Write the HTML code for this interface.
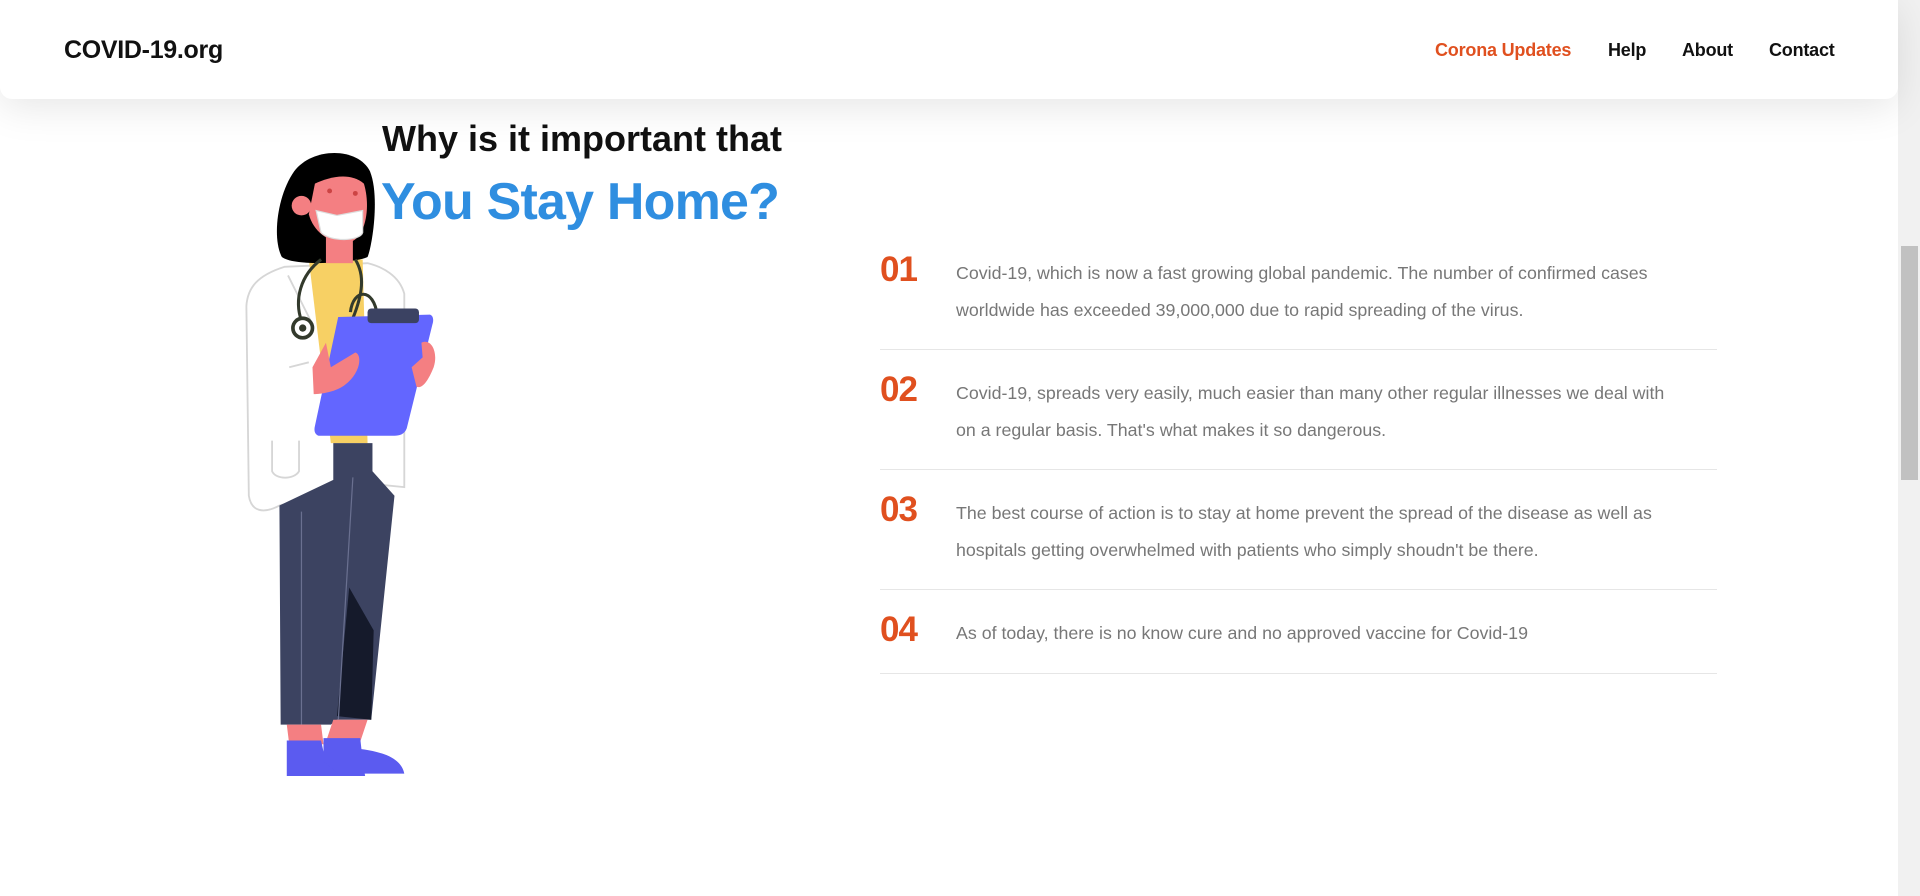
<!DOCTYPE html>
<html><head><meta charset="utf-8">
<style>
html,body{margin:0;padding:0;width:1920px;height:896px;overflow:hidden;background:#fff;font-family:"Liberation Sans",sans-serif;}
.nav{position:absolute;left:0;top:0;width:1898px;height:99px;background:#fff;border-radius:0 0 12px 12px;box-shadow:0 8px 40px rgba(0,0,0,0.10);z-index:2}
.logo{position:absolute;left:64px;top:36px;font-size:25px;font-weight:bold;color:#111;letter-spacing:-0.3px}
.menu{position:absolute;top:40px;font-size:18px;color:#111;font-weight:bold;letter-spacing:-0.2px}
.sb{position:absolute;left:1898px;top:0;width:22px;height:896px;background:#f1f1f1}
.thumb{position:absolute;left:1901px;top:246px;width:17px;height:234px;background:#c1c1c1}
h1{position:absolute;margin:0;left:382px;top:118px;font-size:36px;font-weight:bold;color:#111;letter-spacing:0px;white-space:nowrap}
h2{position:absolute;margin:0;left:381px;top:172px;font-size:52px;font-weight:bold;color:#2f8ee0;letter-spacing:-0.8px;white-space:nowrap}
.num{position:absolute;left:880px;font-size:35px;font-weight:bold;color:#e0501f;letter-spacing:-1px}
.txt{position:absolute;left:956px;font-size:17.8px;color:#777;line-height:37px;white-space:nowrap}
.hr{position:absolute;left:880px;width:837px;height:1px;background:#e6e6e6}
svg{position:absolute;left:0;top:0}
</style></head><body>
<div class="nav">
<div class="logo">COVID-19.org</div>
<div class="menu" style="left:1435px;color:#e0501f">Corona Updates</div>
<div class="menu" style="left:1608px">Help</div>
<div class="menu" style="left:1682px">About</div>
<div class="menu" style="left:1769px">Contact</div>
</div>
<div class="sb"></div><div class="thumb"></div>
<svg width="1920" height="896" viewBox="0 0 1568 732">
<path d="M232,218 C210,225 202,235 201,250 L203,405 C205,418 215,420 228,413 L300,395 L330,398 L330,240 C326,225 312,218 300,215 Z" fill="#fff" stroke="#d6d6d6" stroke-width="1.5"/>
<path d="M222,360 L222,385 C225,392 240,392 244,385 L244,360" fill="none" stroke="#d6d6d6" stroke-width="1.5"/>
<path d="M236,300 L252,296 M235,225 L255,265" stroke="#d6d6d6" stroke-width="1.5"/>
<path d="M252,212 L296,212 L300,362 L270,362 Z" fill="#f7d064"/>
<path d="M228,413 L272,392 L272,362 L304,362 L304,385 L322,405 L303,588 L275,588 L270,592 L229,592 Z" fill="#3c4361"/>
<path d="M285,480 L305,515 L303,588 L275,585 Z" fill="#151a2b"/>
<path d="M246,418 L246,592 M288,390 L276,590" stroke="#6a7090" stroke-width="1"/>
<path d="M234,592 L262,592 L264,608 L236,608 Z M272,588 L300,588 L294,606 L266,606 Z" fill="#f47f82"/>
<path d="M234,605 L262,605 L264,614 L296,622 L298,634 L234,634 Z" fill="#5b5bf0"/>
<path d="M264,603 L294,603 L295,612 C318,615 328,622 330,632 L276,632 L264,622 Z" fill="#5b5bf0"/>
<path d="M240,140 C255,120 292,120 302,140 C310,160 304,200 300,210 C290,215 240,218 230,210 C222,195 226,160 240,140 Z" fill="#000"/>
<rect x="266" y="190" width="22" height="25" fill="#f47f82"/>
<path d="M257,150 C268,145 285,140 297,150 C303,170 298,195 285,198 C270,200 256,190 252,175 Z" fill="#f47f82"/>
<circle cx="246" cy="168" r="8" fill="#f47f82"/>
<circle cx="269" cy="156" r="2" fill="#c44" /><circle cx="290" cy="158" r="2" fill="#c44"/>
<path d="M258,172 L275,176 L296,172 L296,190 C294,197 270,198 262,190 Z" fill="#fff" stroke="#ddd"/>
<path d="M262,212 C245,225 240,245 246,262 M290,212 C298,225 296,240 288,260 M286,255 C288,236 305,234 308,258" fill="none" stroke="#333a2c" stroke-width="2.5"/>
<circle cx="247" cy="268" r="8" fill="#fff" stroke="#333a2c" stroke-width="3"/><circle cx="247" cy="268" r="3" fill="#333a2c"/>
<path d="M276,259 L351,257 C354,258 354,262 353,265 L332,350 C330,355 326,356 322,356 L260,356 C257,355 256,352 257,348 Z" fill="#6366ff"/>
<rect x="300" y="252" width="42" height="12" rx="3" fill="#3b4262"/>
<path d="M266,280 L270,300 L290,288 C296,290 294,305 282,314 C275,320 262,322 256,322 L255,300 Z" fill="#f47f82"/>
<path d="M344,280 C352,276 358,288 354,300 C350,310 345,318 340,316 L336,300 L345,292 Z" fill="#f47f82"/>
</svg>
<h1>Why is it important that</h1>
<h2>You Stay Home?</h2>

<div class="num" style="top:250px">01</div>
<div class="txt" style="top:255px">Covid-19, which is now a fast growing global pandemic. The number of confirmed cases<br>worldwide has exceeded 39,000,000 due to rapid spreading of the virus.</div>
<div class="hr" style="top:349px"></div>
<div class="num" style="top:370px">02</div>
<div class="txt" style="top:375px">Covid-19, spreads very easily, much easier than many other regular illnesses we deal with<br>on a regular basis. That's what makes it so dangerous.</div>
<div class="hr" style="top:469px"></div>
<div class="num" style="top:490px">03</div>
<div class="txt" style="top:495px">The best course of action is to stay at home prevent the spread of the disease as well as<br>hospitals getting overwhelmed with patients who simply shoudn't be there.</div>
<div class="hr" style="top:589px"></div>
<div class="num" style="top:610px">04</div>
<div class="txt" style="top:615px">As of today, there is no know cure and no approved vaccine for Covid-19</div>
<div class="hr" style="top:673px"></div>
</body></html>
